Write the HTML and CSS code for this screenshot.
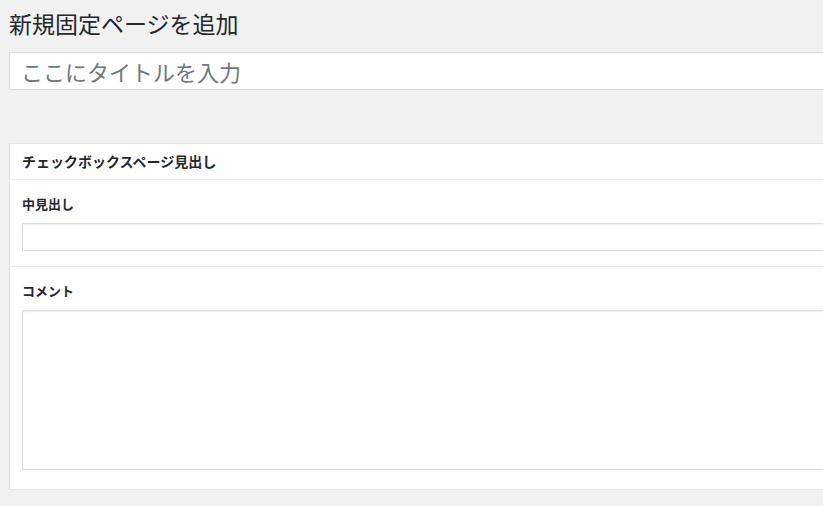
FILE: index.html
```html
<!DOCTYPE html>
<html lang="ja">
<head>
  <meta charset="UTF-8">
  <title>新規固定ページを追加</title>
  <link rel="stylesheet" href="styles.css">
</head>
<body>
<div class="wrap">
  <h1 class="page-title">新規固定ページを追加</h1>
  <div class="title-wrap">
    <input type="text" class="title-input" placeholder="ここにタイトルを入力">
  </div>

  <!-- カスタムフィールドのボックス -->
  <div class="postbox">
    <h2 class="postbox-head">チェックボックスページ見出し</h2>
    <div class="field">
      <label class="field-label">中見出し</label>
      <input type="text" class="field-input">
    </div>
    <div class="field field-last">
      <label class="field-label">コメント</label>
      <textarea class="field-textarea"></textarea>
    </div>
  </div>
</div>
</body>
</html>
```

FILE: styles.css
```css
html, body {
  margin: 0;
  padding: 0;
  background: #f1f1f1;
  overflow: hidden;
}
body {
  font-family: "Noto Sans CJK JP", "Noto Sans", sans-serif;
  color: #23282d;
  font-size: 13px;
}
.wrap {
  width: 1000px;
  padding-left: 9px;
}
.page-title {
  margin: 0;
  padding-top: 9px;
  font-size: 23px;
  font-weight: 400;
  line-height: 29px;
  color: #23282d;
}
.title-wrap {
  margin-top: 14px;
}
.title-input {
  box-sizing: border-box;
  width: 100%;
  height: 38px;
  margin: 0;
  padding: 3px 11px;
  border: 1px solid #ddd;
  background: #fff;
  font-family: inherit;
  font-size: 22px;
  outline: none;
  box-shadow: inset 0 1px 2px rgba(0,0,0,0.04);
}
.title-input::placeholder {
  color: #72777c;
}
.postbox {
  margin-top: 53px;
  background: #fff;
  border: 1px solid #e5e5e5;
  box-shadow: 0 1px 1px rgba(0,0,0,0.04);
}
.postbox-head {
  margin: 0;
  height: 35px;
  line-height: 35px;
  padding: 0 12px;
  font-size: 14px;
  font-weight: 600;
  border-bottom: 1px solid #eee;
}
.field {
  padding: 15px 12px 15px;
  border-bottom: 1px solid #eee;
}
.field-last {
  border-bottom: none;
  padding-bottom: 19px;
}
.field-label {
  display: block;
  line-height: 18px;
  font-size: 13px;
  font-weight: 600;
}
.field-input, .field-textarea {
  display: block;
  box-sizing: border-box;
  width: 100%;
  margin: 10px 0 0;
  border: 1px solid #ddd;
  background: #fff;
  box-shadow: inset 0 1px 2px rgba(0,0,0,0.07);
  font-family: inherit;
  outline: none;
}
.field-input {
  height: 28px;
}
.field-textarea {
  height: 160px;
  resize: none;
}
```
